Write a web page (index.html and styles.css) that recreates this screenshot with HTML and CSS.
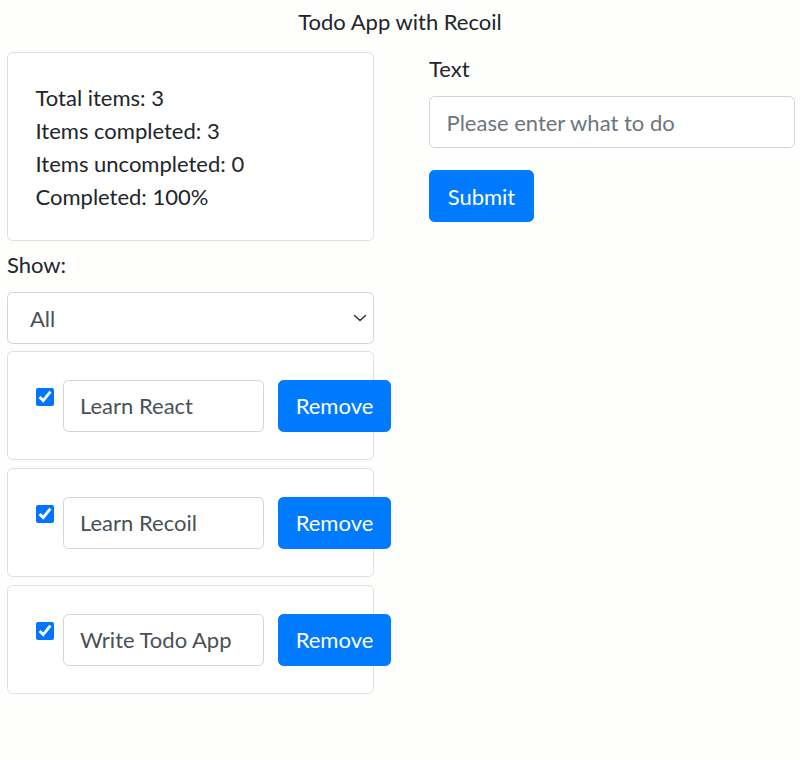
FILE: index.html
```html
<!DOCTYPE html>
<html lang="en">
<head>
<meta charset="utf-8">
<title>Todo App with Recoil</title>
<link rel="stylesheet" href="styles.css">
</head>
<body>
<h1 class="title">Todo App with Recoil</h1>
<main class="layout">
  <section class="left">
    <div class="card stats">
      <div class="line">Total items: 3</div>
      <div class="line">Items completed: 3</div>
      <div class="line">Items uncompleted: 0</div>
      <div class="line">Completed: 100%</div>
    </div>
    <label class="label show-label" for="filter">Show:</label>
    <div class="select-wrap">
      <select id="filter" class="select">
        <option>All</option>
        <option>Completed</option>
        <option>Uncompleted</option>
      </select>
      <svg class="chevron" width="14" height="8" viewBox="0 0 14 8" aria-hidden="true"><path d="M1.5 1.5l5.5 5 5.5-5" fill="none" stroke="#343a40" stroke-width="1.6" stroke-linecap="round" stroke-linejoin="round"/></svg>
    </div>
    <div class="card item">
      <input type="checkbox" class="check" checked>
      <input type="text" class="input item-input" value="Learn React">
      <button class="btn">Remove</button>
    </div>
    <div class="card item">
      <input type="checkbox" class="check" checked>
      <input type="text" class="input item-input" value="Learn Recoil">
      <button class="btn">Remove</button>
    </div>
    <div class="card item">
      <input type="checkbox" class="check" checked>
      <input type="text" class="input item-input" value="Write Todo App">
      <button class="btn">Remove</button>
    </div>
  </section>
  <section class="right">
    <label class="label" for="text">Text</label>
    <input id="text" type="text" class="input new-input" placeholder="Please enter what to do">
    <button class="btn submit">Submit</button>
  </section>
</main>
</body>
</html>
```
FILE: styles.css
```css
html, body {
  margin: 0;
  background: #fefefd;
}
body {
  font-family: "Lato", "Liberation Sans", sans-serif;
  font-size: 22px;
  line-height: 33px;
  color: #212529;
}
.title {
  margin: 0 0 14px;
  padding-top: 5px;
  font-size: 22px;
  font-weight: 400;
  line-height: 33px;
  text-align: center;
}
.layout {
  display: grid;
  grid-template-columns: 367px 366px;
  column-gap: 55px;
  padding-left: 7px;
  align-items: start;
}
.left, .right {
  display: flex;
  flex-direction: column;
  align-items: stretch;
}
.card {
  background: #fff;
  border: 1px solid #dfdfe2;
  border-radius: 5.5px;
  padding: 27.5px;
}
.line {
  line-height: 33px;
}
.label {
  display: block;
  line-height: 33px;
  margin-bottom: 11px;
}
.show-label {
  margin-top: 7px;
}
.select-wrap {
  position: relative;
  margin-bottom: 7px;
}
.select {
  display: block;
  width: 100%;
  height: 52px;
  box-sizing: border-box;
  -webkit-appearance: none;
  appearance: none;
  background: #fff;
  border: 1px solid #ced4da;
  border-radius: 5.5px;
  padding: 0 40px 0 22px;
  font: inherit;
  font-size: 22px;
  color: #495057;
  outline: none;
}
.chevron {
  position: absolute;
  right: 7px;
  top: 22px;
  pointer-events: none;
}
.item {
  display: flex;
  align-items: flex-start;
  margin-bottom: 8px;
}
.check {
  flex: 0 0 auto;
  width: 17.5px;
  height: 17.5px;
  margin: 8.5px 9px 0 0.5px;
}
.input {
  box-sizing: border-box;
  height: 52px;
  border: 1px solid #ced4da;
  border-radius: 5.5px;
  background: #fff;
  padding: 0 16.5px;
  font: inherit;
  font-size: 22px;
  color: #495057;
  outline: none;
}
.input::placeholder {
  color: #6c757d;
}
.item-input {
  flex: 0 0 201px;
  width: 201px;
}
.btn {
  flex: 0 0 auto;
  box-sizing: border-box;
  height: 52px;
  border: 1px solid #007bff;
  border-radius: 5.5px;
  background: #007bff;
  color: #fff;
  font: inherit;
  font-size: 22px;
  padding: 0 17.2px;
  margin-left: 14px;
}
.new-input {
  width: 100%;
  margin-bottom: 22px;
}
.submit {
  align-self: flex-start;
  margin-left: 0;
  padding: 0 17.7px;
}
```
